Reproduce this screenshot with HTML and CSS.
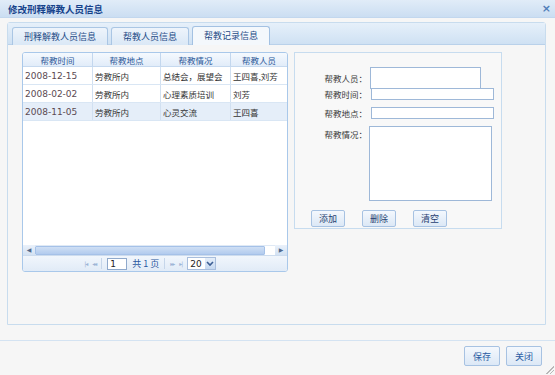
FILE: index.html
```html
<!DOCTYPE html>
<html lang="zh">
<head>
    <meta charset="UTF-8">
    <title>修改刑释解教人员信息</title>
    <link rel="stylesheet" href="styles.css">
</head>
<body>
    <div class="window">
        <div class="titlebar">
            <span class="title">修改刑释解教人员信息</span>
            <span class="close">×</span>
        </div>

        <div class="tab-panel">
            <div class="tab-strip">
                <div class="tab">刑释解教人员信息</div>
                <div class="tab">帮教人员信息</div>
                <div class="tab active">帮教记录信息</div>
            </div>

            <div class="tab-body">
                <div class="grid">
                    <div class="grid-row grid-head">
                        <div class="cell c1">帮教时间</div>
                        <div class="cell c2">帮教地点</div>
                        <div class="cell c3">帮教情况</div>
                        <div class="cell c4">帮教人员</div>
                    </div>
                    <div class="grid-row">
                        <div class="cell c1 date">2008-12-15</div>
                        <div class="cell c2">劳教所内</div>
                        <div class="cell c3">总结会，展望会</div>
                        <div class="cell c4">王四喜,刘芳</div>
                    </div>
                    <div class="grid-row">
                        <div class="cell c1 date">2008-02-02</div>
                        <div class="cell c2">劳教所内</div>
                        <div class="cell c3">心理素质培训</div>
                        <div class="cell c4">刘芳</div>
                    </div>
                    <div class="grid-row selected">
                        <div class="cell c1 date">2008-11-05</div>
                        <div class="cell c2">劳教所内</div>
                        <div class="cell c3">心灵交流</div>
                        <div class="cell c4">王四喜</div>
                    </div>
                    <div class="grid-fill"></div>
                    <div class="hscroll">
                        <span class="sbtn">&#9664;</span>
                        <span class="track"><span class="thumb"></span></span>
                        <span class="sbtn">&#9654;</span>
                    </div>
                    <div class="pager">
                        <span class="pg-icon">|◂</span>
                        <span class="pg-icon">◂◂</span>
                        <span class="pg-sep"></span>
                        <span class="pg-input">1</span>
                        <span class="pg-text">共 1 页</span>
                        <span class="pg-sep"></span>
                        <span class="pg-icon">▸▸</span>
                        <span class="pg-icon">▸|</span>
                        <span class="pg-select">20<span class="pg-arrow">
                            <svg width="8" height="6" viewBox="0 0 8 6"><path d="M1 1 L4 4 L7 1" fill="none" stroke="#3d5f94" stroke-width="1.6"/></svg>
                        </span></span>
                    </div>
                </div>

                <div class="form-panel">
                    <div class="form-row first">
                        <label>帮教人员：</label>
                        <div class="field tall"></div>
                    </div>
                    <div class="form-row">
                        <label>帮教时间：</label>
                        <div class="field"></div>
                    </div>
                    <div class="form-row">
                        <label>帮教地点：</label>
                        <div class="field"></div>
                    </div>
                    <div class="form-row top">
                        <label>帮教情况：</label>
                        <div class="field area"></div>
                    </div>
                    <div class="form-buttons">
                        <button class="btn">添加</button>
                        <button class="btn">删除</button>
                        <button class="btn">清空</button>
                    </div>
                </div>
            </div>
        </div>

        <div class="footer">
            <button class="btn wide">保存</button>
            <button class="btn wide">关闭</button>
        </div>
        <div class="grip"></div>
    </div>
</body>
</html>
```

FILE: styles.css
```css
body {
    margin: 0;
    background-color: #f6f6f6;
    font-family: "DejaVu Sans", "Noto Sans CJK SC", sans-serif;
    font-size: 9px;
    color: #333333;
}

.window {
    width: 555px;
    height: 375px;
    position: relative;
    background-color: #f6f6f6;
}

.titlebar {
    height: 17px;
    display: flex;
    justify-content: space-between;
    align-items: center;
    padding: 0 4px 0 8px;
    background: linear-gradient(#e1ecf8, #cbdef2);
    border-bottom: 1px solid #c2d7ee;
}

.title {
    font-family: "Noto Sans CJK SC", sans-serif;
    font-weight: bold;
    font-size: 9.5px;
    color: #15428b;
}

.close {
    font-family: "DejaVu Sans", sans-serif;
    font-weight: bold;
    font-size: 11px;
    color: #4f7cb8;
}

.tab-panel {
    margin: 4px 9px 0 7px;
    border: 1px solid #c8dcee;
    border-radius: 3px 3px 0 0;
}

.tab-strip {
    height: 21px;
    display: flex;
    align-items: flex-end;
    gap: 3px;
    padding-left: 4px;
    background: linear-gradient(#e6f0fa, #cfe1f3);
    border-bottom: 1px solid #b9d1ea;
}

.tab {
    height: 17px;
    line-height: 17px;
    padding: 0 11px;
    font-family: "Noto Sans CJK SC", sans-serif;
    font-size: 9px;
    color: #1d4a86;
    border: 1px solid #aac6e4;
    border-bottom: none;
    border-radius: 3px 3px 0 0;
    background: linear-gradient(#eef4fb, #dae8f6);
    margin-bottom: -1px;
}

.tab.active {
    background: #f4f8fc;
    border-color: #a3c1e2;
    height: 18px;
}

.tab-body {
    height: 272px;
    padding: 7px 0 0 14px;
    display: flex;
    align-items: flex-start;
    gap: 6px;
}

.grid {
    width: 264px;
    height: 218px;
    border: 1px solid #a9c8ea;
    border-radius: 3px;
    display: flex;
    flex-direction: column;
    background-color: #ffffff;
    overflow: hidden;
}

.grid-row {
    display: flex;
    height: 17px;
    border-bottom: 1px solid #d9e6f4;
}

.grid-row.selected {
    background-color: #e5eef9;
}

.grid-head {
    height: 13px;
    background: linear-gradient(#f5f9fe, #e1ecf9);
    border-bottom: 1px solid #c6d9ef;
}

.cell {
    font-family: "Noto Sans CJK SC", sans-serif;
    font-size: 8.5px;
    display: flex;
    align-items: center;
    padding-left: 2px;
    border-right: 1px solid #d1e0f1;
    box-sizing: border-box;
    white-space: nowrap;
    overflow: hidden;
}

.grid-head .cell {
    justify-content: center;
    padding-left: 0;
    color: #2c5898;
    border-right-color: #c3d7ee;
}

.c1 { width: 70px; }
.c2 { width: 68px; }
.c3 { width: 70px; }
.c4 { width: 56px; border-right: none; }

.cell.date {
    font-family: "DejaVu Sans", sans-serif;
    font-size: 9px;
    color: #5b4a52;
}

.grid-fill {
    flex: 1;
}

.hscroll {
    height: 10px;
    display: flex;
    background-color: #f2f6fb;
}

.sbtn {
    width: 12px;
    font-size: 6px;
    line-height: 10px;
    text-align: center;
    color: #52698d;
    background: linear-gradient(#eaf1fa, #d3e2f3);
}

.track {
    flex: 1;
    display: flex;
    background-color: #ffffff;
    border-top: 1px solid #dfe9f5;
}

.thumb {
    width: 228px;
    background: linear-gradient(#cfdff4, #b2cbee);
    border: 1px solid #a5c1e8;
    border-radius: 1px;
}

.pager {
    height: 15px;
    display: flex;
    align-items: center;
    justify-content: center;
    gap: 5px;
    background: linear-gradient(#f1f6fc, #e1ebf7);
    border-top: 1px solid #cddcee;
    font-size: 6px;
    padding-right: 10px;
}

.pg-icon {
    color: #9db4d6;
    letter-spacing: -1px;
}

.pg-sep {
    width: 1px;
    height: 11px;
    background-color: #c6d6ea;
}

.pg-input {
    width: 16px;
    height: 10px;
    line-height: 10px;
    padding-left: 2px;
    font-size: 9px;
    color: #222222;
    background-color: #ffffff;
    border: 1px solid #8fa9cc;
}

.pg-text {
    font-family: "Noto Sans CJK SC", sans-serif;
    font-size: 9px;
    color: #2a57a0;
}

.pg-select {
    display: flex;
    align-items: center;
    height: 11px;
    font-size: 9px;
    color: #222222;
    background-color: #ffffff;
    border: 1px solid #a8bedd;
    padding-left: 2px;
}

.pg-arrow {
    display: flex;
    align-items: center;
    justify-content: center;
    width: 10px;
    height: 11px;
    margin-left: 3px;
    background: linear-gradient(#e5eef9, #c5d8f0);
}

.form-panel {
    width: 208px;
    height: 177px;
    border: 1px solid #c7dcef;
    background-color: #f8f8f8;
    padding-top: 14px;
    box-sizing: border-box;
    display: flex;
    flex-direction: column;
}

.form-row {
    display: flex;
    align-items: center;
    margin-bottom: 7px;
}

.form-row.first {
    margin-bottom: -1px;
}

.form-row.top {
    align-items: flex-start;
    margin-bottom: 9px;
}

.form-row label {
    width: 72px;
    text-align: right;
    font-family: "Noto Sans CJK SC", sans-serif;
    font-size: 8.5px;
    color: #3a3a3a;
    padding-right: 4px;
}

.form-row.top label {
    padding-top: 2px;
}

.field {
    width: 121px;
    height: 10px;
    background-color: #ffffff;
    border: 1px solid #9eb8d8;
}

.field.tall {
    width: 109px;
    height: 20px;
    margin-left: -1px;
}

.field.area {
    height: 73px;
    margin-left: -2px;
}

.form-buttons {
    display: flex;
    gap: 17px;
    padding-left: 16px;
}

.btn {
    width: 34px;
    height: 17px;
    padding: 0;
    font-family: "Noto Sans CJK SC", sans-serif;
    font-size: 9px;
    color: #1f3f70;
    background: linear-gradient(#f4f8fd, #dce8f6);
    border: 1px solid #a7c2e2;
    border-radius: 2px;
}

.footer {
    margin-top: 15px;
    border-top: 1px solid #d4e3f2;
    display: flex;
    justify-content: flex-end;
    gap: 6px;
    padding: 5px 13px 0 0;
}

.btn.wide {
    width: 36px;
    height: 20px;
    color: #2a5ca3;
}

.grip {
    position: absolute;
    right: 1px;
    bottom: 1px;
    width: 8px;
    height: 8px;
    background: linear-gradient(135deg, transparent 50%, #b7b7b7 50%, #b7b7b7 60%, transparent 60%, transparent 70%, #b7b7b7 70%, #b7b7b7 80%, transparent 80%);
}
```
